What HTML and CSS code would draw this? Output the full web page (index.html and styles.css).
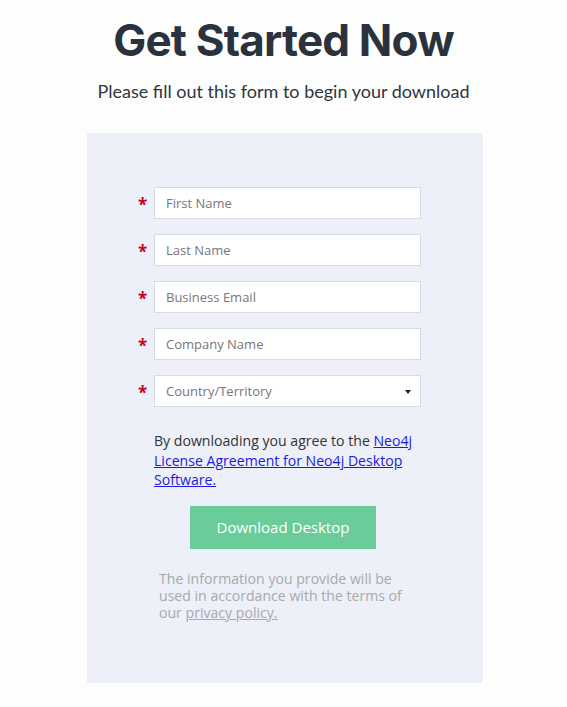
FILE: index.html
```html
<!DOCTYPE html>
<html>
<head>
<meta charset="utf-8">
<link rel="stylesheet" href="styles.css">
</head>
<body>
<div class="page">
  <h1 class="title">Get Started Now</h1>
  <p class="subtitle">Please fill out this form to begin your download</p>
  <div class="panel">
    <form class="form">
      <div class="row"><span class="req">*</span><div class="field">First Name</div></div>
      <div class="row"><span class="req">*</span><div class="field">Last Name</div></div>
      <div class="row"><span class="req">*</span><div class="field">Business Email</div></div>
      <div class="row"><span class="req">*</span><div class="field">Company Name</div></div>
      <div class="row"><span class="req">*</span><div class="field select">Country/Territory<span class="caret"></span></div></div>
      <p class="agree">By downloading you agree to the <a href="#">Neo4j License Agreement for Neo4j Desktop Software.</a></p>
      <div class="btnwrap"><button type="button" class="btn">Download Desktop</button></div>
      <p class="info">The information you provide will be used in accordance with the terms of our <a href="#">privacy policy.</a></p>
    </form>
  </div>
</div>
</body>
</html>
```
FILE: styles.css
```css
* { box-sizing: border-box; }
html, body { margin: 0; padding: 0; background: #fdfdfd; }
.page { display: flex; flex-direction: column; align-items: center; }
.title {
  margin: 12px 0 0;
  font-family: "Inter", "Liberation Sans", sans-serif;
  font-weight: 700;
  font-size: 44px;
  line-height: 56px;
  color: #2a323d;
  letter-spacing: -0.8px;
}
.subtitle {
  margin: 11px 0 0;
  font-family: "Lato", "Noto Sans", sans-serif;
  font-size: 18px;
  line-height: 24px;
  color: #2f3640;
}
.panel {
  margin-top: 30px;
  width: 396px;
  height: 550px;
  background: #edf0f8;
  margin-left: 3px;
}
.form { padding: 54px 0 0 50px; width: 340px; font-family: "Open Sans", sans-serif; }
.row { display: flex; align-items: center; height: 31px; margin-bottom: 16px; }
.req { width: 17px; color: #c8001a; font-size: 17px; font-weight: 700; line-height: 1; padding-top: 3px; padding-left: 1px; }
.field {
  width: 267px; height: 32px;
  background: #fff;
  border: 1px solid #d8dbe0;
  padding-left: 11px;
  font-size: 13px; line-height: 30px;
  color: #777;
  display: flex; align-items: center;
}
.select { position: relative; }
.caret {
  position: absolute; right: 9px; top: 14px;
  border-left: 3.5px solid transparent; border-right: 3.5px solid transparent;
  border-top: 4px solid #222;
}
.agree {
  margin: 25px 0 0 17px; width: 270px;
  font-size: 14.1px; line-height: 19.5px; color: #333;
}
.agree a { color: #1a1ae0; }
.btnwrap { display: flex; margin: 16px 0 0 53px; }
.btn {
  width: 186px; height: 43px;
  background: #6acc99; border: none; color: #fff;
  font-family: "Open Sans", sans-serif; font-size: 15px;
}
.info {
  margin: 21px 0 0 22px; width: 260px;
  font-size: 14.1px; line-height: 17px; color: #a9a9a9;
}
.info a { color: #a9a9a9; }
```
